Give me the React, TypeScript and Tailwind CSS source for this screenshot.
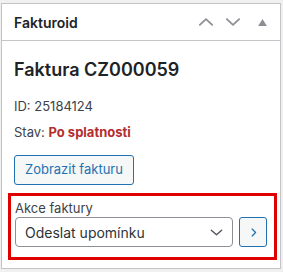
import React from 'react';

const font = { fontFamily: 'Inter, "Liberation Sans", sans-serif' };

function Chevron({ dir, className, width = 1.8 }: { dir: 'up' | 'down' | 'right'; className?: string; width?: number }) {
  const d =
    dir === 'up' ? 'M2.5 10.5 L8 5.5 L13.5 10.5' : dir === 'down' ? 'M2.5 5.5 L8 10.5 L13.5 5.5' : 'M6 3 L11 8 L6 13';
  return (
    <svg viewBox="0 0 16 16" className={className} fill="none" stroke="currentColor" strokeWidth={width} strokeLinecap="round" strokeLinejoin="round">
      <path d={d} />
    </svg>
  );
}

export default function App() {
  return (
    <div className="w-[283px] h-[272px] bg-[#f0f0f1] pt-[3px] pl-[1px] overflow-hidden" style={font}>
      <div className="w-[280px] h-[266px] bg-white border border-[#c3c4c7] flex flex-col">
        <div className="h-[37px] flex items-center border-b border-[#c3c4c7] pl-[12px]">
          <h2 className="flex-1 text-[14px] font-semibold text-[#1d2327]">Fakturoid</h2>
          <div className="flex items-center text-[#8c8f94]">
            <span className="w-[27px] h-[36px] flex items-center justify-center">
              <Chevron dir="up" className="w-[18px] h-[18px]" width={1.6} />
            </span>
            <span className="w-[27px] h-[36px] flex items-center justify-center">
              <Chevron dir="down" className="w-[18px] h-[18px]" width={1.6} />
            </span>
            <span className="w-[34px] h-[36px] flex items-center justify-center pr-[2px]">
              <svg viewBox="0 0 10 8" className="w-[9px] h-[7px]" fill="currentColor">
                <path d="M5 0 L10 8 L0 8 Z" />
              </svg>
            </span>
          </div>
        </div>
        <div className="px-[12px] text-[#1d2327]">
          <h3 className="mt-[17px] text-[18px] leading-[24px] font-semibold">Faktura CZ000059</h3>
          <p className="mt-[14px] text-[13px] leading-[20px] text-[#3c434a]">ID: 25184124</p>
          <p className="mt-[6px] text-[13px] leading-[20px] text-[#3c434a]">
            Stav: <span className="font-bold text-[#b32d2e]">Po splatnosti</span>
          </p>
          <button className="mt-[13px] h-[30px] px-[10px] border border-[#2271b1] rounded-[3px] bg-[#f6f7f7] text-[#2271b1] text-[13px]">
            Zobrazit fakturu
          </button>
          <div className="mt-[8px] ml-[-6px] mr-[-9px] h-[67px] border-[3px] border-[#e00000] pl-[4px] pr-[7px] pt-[3px]">
            <label className="block text-[13px] leading-[18px] text-[#3c434a]">Akce faktury</label>
            <div className="flex gap-[6px]">
              <div className="flex-1 h-[30px] border border-[#8c8f94] rounded-[4px] flex items-center pl-[9px] pr-[8px]">
                <span className="flex-1 text-[14px] text-[#2c3338]">Odeslat upomínku</span>
                <Chevron dir="down" className="w-[15px] h-[15px] text-[#50575e]" width={1.5} />
              </div>
              <button className="w-[28px] h-[30px] border border-[#2271b1] rounded-[3px] bg-[#f6f7f7] text-[#2271b1] flex items-center justify-center">
                <Chevron dir="right" className="w-[11px] h-[11px]" />
              </button>
            </div>
          </div>
        </div>
      </div>
    </div>
  );
}
